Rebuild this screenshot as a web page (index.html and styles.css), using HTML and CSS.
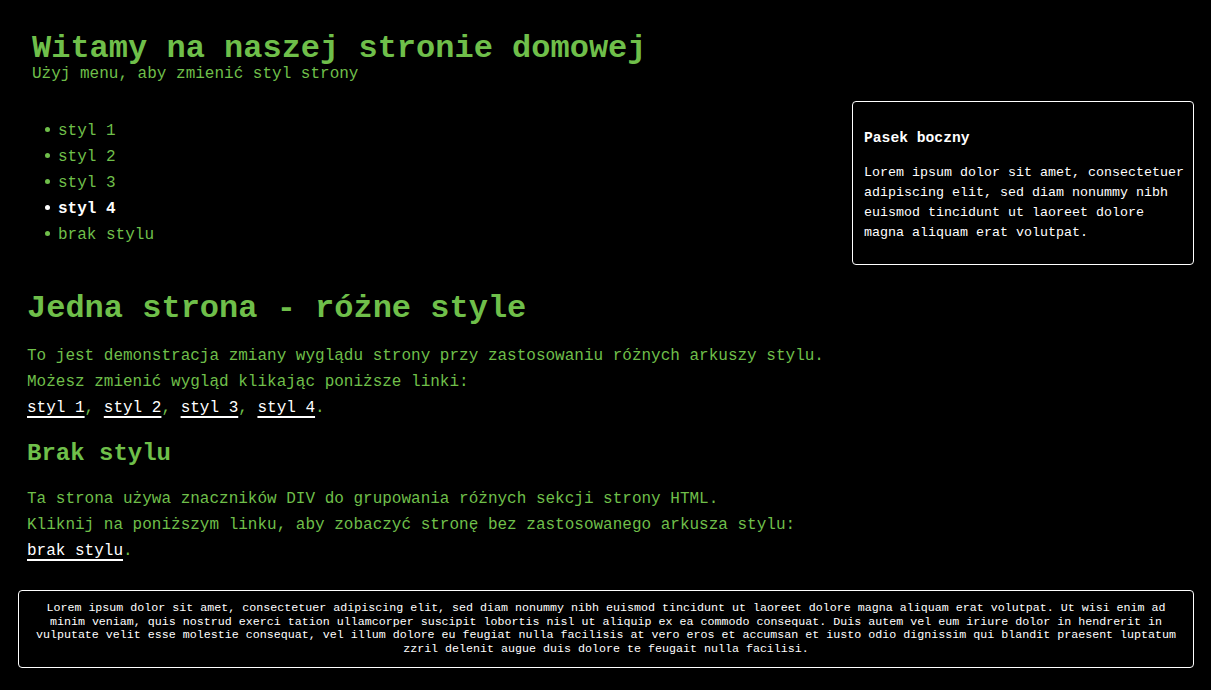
FILE: index.html
```html
<!DOCTYPE html>
<html lang="pl">
<head>
<meta charset="utf-8">
<title>Witamy na naszej stronie domowej</title>
<link rel="stylesheet" href="styles.css">
</head>
<body>
<div class="header">
  <h1 class="title">Witamy na naszej stronie domowej</h1>
  <div class="subtitle">Użyj menu, aby zmienić styl strony</div>
</div>
<div class="layout">
  <div class="main-col">
    <ul class="menu">
      <li><a href="#">styl 1</a></li>
      <li><a href="#">styl 2</a></li>
      <li><a href="#">styl 3</a></li>
      <li class="active"><a href="#">styl 4</a></li>
      <li><a href="#">brak stylu</a></li>
    </ul>
    <div class="content">
      <h2 class="h2">Jedna strona - różne style</h2>
      <p class="text">To jest demonstracja zmiany wyglądu strony przy zastosowaniu różnych arkuszy stylu.<br>
      Możesz zmienić wygląd klikając poniższe linki:<br>
      <a class="link" href="#">styl 1</a>, <a class="link" href="#">styl 2</a>, <a class="link" href="#">styl 3</a>, <a class="link" href="#">styl 4</a>.</p>
      <h3 class="h3">Brak stylu</h3>
      <p class="text text2">Ta strona używa znaczników DIV do grupowania różnych sekcji strony HTML.<br>
      Kliknij na poniższym linku, aby zobaczyć stronę bez zastosowanego arkusza stylu:<br>
      <a class="link" href="#">brak stylu</a>.</p>
    </div>
  </div>
  <div class="sidebar">
    <h3 class="side-title">Pasek boczny</h3>
    <p class="side-text">Lorem ipsum dolor sit amet, consectetuer adipiscing elit, sed diam nonummy nibh euismod tincidunt ut laoreet dolore magna aliquam erat volutpat.</p>
  </div>
</div>
<div class="footer">Lorem ipsum dolor sit amet, consectetuer adipiscing elit, sed diam nonummy nibh euismod tincidunt ut laoreet dolore magna aliquam erat volutpat. Ut wisi enim ad minim veniam, quis nostrud exerci tation ullamcorper suscipit lobortis nisl ut aliquip ex ea commodo consequat. Duis autem vel eum iriure dolor in hendrerit in vulputate velit esse molestie consequat, vel illum dolore eu feugiat nulla facilisis at vero eros et accumsan et iusto odio dignissim qui blandit praesent luptatum zzril delenit augue duis dolore te feugait nulla facilisi.</div>
</body>
</html>
```
FILE: styles.css
```css
html, body {
  background: #000;
}
body {
  margin: 0;
  padding: 0 17px 0 18px;
  color: #6fbf4a;
  font-family: "Liberation Mono", "Courier New", monospace;
}
.header {
  padding: 31.5px 14px 0;
  margin-bottom: 18.5px;
}
.title {
  margin: 0;
  font-size: 32px;
  line-height: 34px;
  font-weight: bold;
}
.subtitle {
  font-size: 16px;
  line-height: 17px;
}
.layout {
  display: grid;
  grid-template-columns: 1fr 342px;
  align-items: start;
}
.main-col {
  padding-left: 9px;
}
.menu {
  list-style: none;
  margin: 0;
  padding: 16.7px 0 0 31px;
  font-size: 16px;
  line-height: 26px;
}
.menu li {
  position: relative;
}
.menu li::before {
  content: "";
  position: absolute;
  left: -13px;
  top: 9px;
  width: 5px;
  height: 5px;
  border-radius: 50%;
  background: #6fbf4a;
}
.menu a {
  color: #6fbf4a;
  text-decoration: none;
}
.menu li.active::before {
  background: #fff;
}
.menu li.active a {
  color: #fff;
  font-weight: bold;
}
.h2 {
  margin: 42px 0 0;
  font-size: 32px;
  line-height: 38px;
  font-weight: bold;
}
.text {
  margin: 15.2px 0 0;
  font-size: 16px;
  line-height: 26px;
}
.h3 {
  margin: 18px 0 0;
  font-size: 24px;
  line-height: 30px;
  font-weight: bold;
}
.text2 {
  margin-top: 17px;
}
.link {
  color: #fff;
  text-decoration: underline;
  text-decoration-thickness: 2px;
  text-underline-offset: 4px;
}
.sidebar {
  border: 1px solid #fff;
  border-radius: 4px;
  padding: 28px 8px 21px 11px;
  color: #fff;
}
.side-title {
  margin: 0 0 16px;
  font-size: 14.67px;
  line-height: 17px;
  font-weight: bold;
}
.side-text {
  margin: 0;
  font-size: 13.333px;
  line-height: 20px;
}
.footer {
  margin-top: 26px;
  border: 1px solid #fff;
  border-radius: 4px;
  padding: 11px 12px 10px;
  color: #fff;
  text-align: center;
  font-size: 11.67px;
  line-height: 13.8px;
}
```
